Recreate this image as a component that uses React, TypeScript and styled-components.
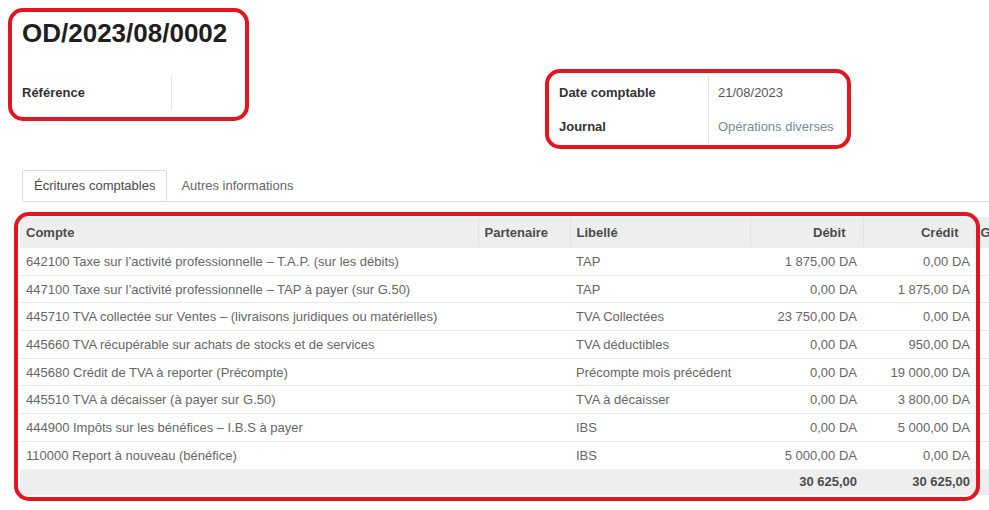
import React from 'react';
import styled, { createGlobalStyle } from 'styled-components';

const GlobalStyle = createGlobalStyle`
  html, body {
    margin: 0;
    padding: 0;
    background: #ffffff;
  }
  body {
    font-family: "Liberation Sans", Arial, sans-serif;
    font-size: 13px;
    color: #666666;
  }
`;

const red = '#e3161f';

type Line = {
  compte: string;
  libelle: string;
  debit: string;
  credit: string;
};

const lines: Line[] = [
  { compte: '642100 Taxe sur l\u2019activité professionnelle \u2013 T.A.P. (sur les débits)', libelle: 'TAP', debit: '1 875,00 DA', credit: '0,00 DA' },
  { compte: '447100 Taxe sur l\u2019activité professionnelle \u2013 TAP à payer (sur G.50)', libelle: 'TAP', debit: '0,00 DA', credit: '1 875,00 DA' },
  { compte: '445710 TVA collectée sur Ventes \u2013 (livraisons juridiques ou matérielles)', libelle: 'TVA Collectées', debit: '23 750,00 DA', credit: '0,00 DA' },
  { compte: '445660 TVA récupérable sur achats de stocks et de services', libelle: 'TVA déductibles', debit: '0,00 DA', credit: '950,00 DA' },
  { compte: '445680 Crédit de TVA à reporter (Précompte)', libelle: 'Précompte mois précédent', debit: '0,00 DA', credit: '19 000,00 DA' },
  { compte: '445510 TVA à décaisser (à payer sur G.50)', libelle: 'TVA à décaisser', debit: '0,00 DA', credit: '3 800,00 DA' },
  { compte: '444900 Impôts sur les bénéfices \u2013 I.B.S à payer', libelle: 'IBS', debit: '0,00 DA', credit: '5 000,00 DA' },
  { compte: '110000 Report à nouveau (bénéfice)', libelle: 'IBS', debit: '5 000,00 DA', credit: '0,00 DA' },
];

const App: React.FC = () => {
  return (
    <Page>
      <GlobalStyle />
      <Sheet>
        <Title>OD/2023/08/0002</Title>
        <FieldGroups>
          <FieldGrid $labelWidth={149}>
            <Label>Référence</Label>
            <Value />
          </FieldGrid>
          <FieldGrid $labelWidth={149}>
            <Label>Date comptable</Label>
            <Value>21/08/2023</Value>
            <Label>Journal</Label>
            <Value $muted>Opérations diverses</Value>
          </FieldGrid>
        </FieldGroups>

        <Tabs>
          <Tab $active>Écritures comptables</Tab>
          <Tab>Autres informations</Tab>
        </Tabs>

        <TableWrap>
          <Table>
            <colgroup>
              <col style={{ width: 458 }} />
              <col style={{ width: 92 }} />
              <col style={{ width: 180 }} />
              <col style={{ width: 113 }} />
              <col style={{ width: 113 }} />
              <col style={{ width: 40 }} />
            </colgroup>
            <thead>
              <tr>
                <Th>Compte</Th>
                <Th>Partenaire</Th>
                <Th>Libellé</Th>
                <Th $num>Débit</Th>
                <Th $num>Crédit</Th>
                <Th $cut>G</Th>
              </tr>
            </thead>
            <tbody>
              {lines.map((l) => (
                <tr key={l.compte}>
                  <Td>{l.compte}</Td>
                  <Td />
                  <Td>{l.libelle}</Td>
                  <Td $num>{l.debit}</Td>
                  <Td $num>{l.credit}</Td>
                  <Td />
                </tr>
              ))}
            </tbody>
            <tfoot>
              <tr>
                <Tf />
                <Tf />
                <Tf />
                <Tf $num>30 625,00</Tf>
                <Tf $num>30 625,00</Tf>
                <Tf />
              </tr>
            </tfoot>
          </Table>
        </TableWrap>
      </Sheet>

      <Highlight style={{ left: 8, top: 8, width: 241, height: 113 }} />
      <Highlight style={{ left: 545, top: 69, width: 306, height: 80 }} />
      <Highlight style={{ left: 14, top: 212, width: 966, height: 289 }} />
    </Page>
  );
};

export default App;

const Page = styled.div`
  position: relative;
  width: 989px;
  height: 510px;
  overflow: hidden;
  background: #ffffff;
`;

const Sheet = styled.div`
  padding: 17px 0 0 20px;
`;

const Title = styled.h1`
  margin: 0 0 0 2px;
  font-family: "Liberation Sans", Arial, sans-serif;
  font-size: 26px;
  line-height: 32px;
  font-weight: 700;
  color: #1f1f1f;
`;

const FieldGroups = styled.div`
  display: grid;
  grid-template-columns: 537px 300px;
  margin: 36px 0 0 2px;
  align-items: start;
`;

const FieldGrid = styled.div<{ $labelWidth: number }>`
  display: grid;
  grid-template-columns: ${(p) => p.$labelWidth}px auto;
  grid-auto-rows: 34px;
  align-items: start;
`;

const Label = styled.div`
  font-weight: 700;
  color: #333333;
  line-height: 16px;
`;

const Value = styled.div<{ $muted?: boolean }>`
  border-left: 1px solid #e4e4e4;
  padding: 9px 0 0 9px;
  margin-top: -9px;
  line-height: 16px;
  box-sizing: border-box;
  height: 34px;
  color: ${(p) => (p.$muted ? '#7c8a96' : '#555555')};
`;

const Tabs = styled.div`
  display: flex;
  margin: 17px 0 0 2px;
  border-bottom: 1px solid #dddddd;
  height: 31px;
`;

const Tab = styled.div<{ $active?: boolean }>`
  padding: 0 11px;
  line-height: 29px;
  height: 31px;
  box-sizing: border-box;
  color: ${(p) => (p.$active ? '#4a4a4a' : '#666666')};
  background: #ffffff;
  border: 1px solid ${(p) => (p.$active ? '#dddddd' : 'transparent')};
  border-bottom-color: ${(p) => (p.$active ? '#ffffff' : 'transparent')};
  margin-bottom: -1px;
  margin-right: 2px;
  border-radius: 2px 2px 0 0;
`;

const TableWrap = styled.div`
  margin-top: 15px;
  width: 1100px;
`;

const Table = styled.table`
  border-collapse: collapse;
  table-layout: fixed;
  width: 996px;
`;

const Th = styled.th<{ $num?: boolean; $cut?: boolean }>`
  background: #eeeeee;
  height: 30px;
  padding: 0 ${(p) => (p.$num ? '17px' : '6px')} 0 ${(p) => (p.$cut ? '4px' : '6px')};
  text-align: ${(p) => (p.$num ? 'right' : 'left')};
  font-weight: 700;
  color: #4c4c4c;
  border-right: 1px solid #e2e2e2;
  white-space: nowrap;
  overflow: hidden;
`;

const Td = styled.td<{ $num?: boolean }>`
  height: 26.7px;
  padding: 0 6px;
  text-align: ${(p) => (p.$num ? 'right' : 'left')};
  color: #666666;
  border-top: 1px solid #eaeaea;
  white-space: nowrap;
  overflow: hidden;
`;

const Tf = styled.td<{ $num?: boolean }>`
  background: #eeeeee;
  height: 26px;
  padding: 0 6px;
  text-align: ${(p) => (p.$num ? 'right' : 'left')};
  font-weight: 700;
  color: #4c4c4c;
  white-space: nowrap;
`;

const Highlight = styled.div`
  position: absolute;
  box-sizing: border-box;
  border: 4px solid ${red};
  border-radius: 15px;
  pointer-events: none;
`;
